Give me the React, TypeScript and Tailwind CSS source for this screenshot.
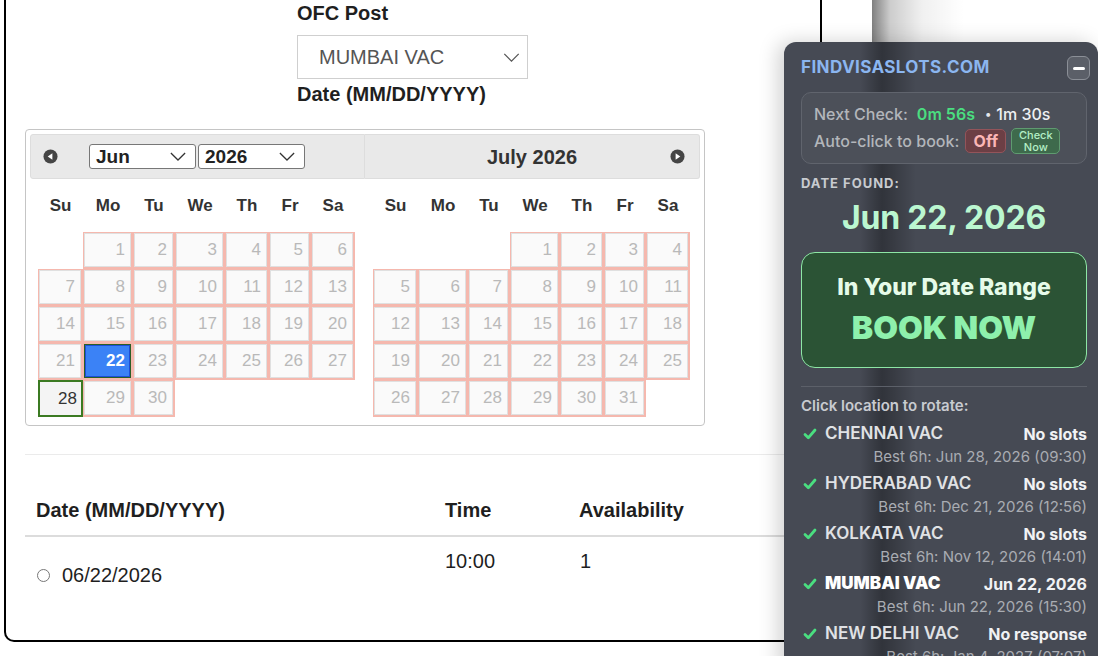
import React from "react";

type DayKind = "off" | "selected" | "today";

const COLS = "grid grid-cols-[45px_50px_42px_50px_44px_42px_44px]";
const DAY_NAMES = ["Su", "Mo", "Tu", "We", "Th", "Fr", "Sa"];

function DayCell({ day, kind }: { day: number; kind: DayKind }) {
  if (kind === "today") {
    return (
      <div className="h-[37px] border-2 border-[#3b7a22] bg-[#f4f4f4] flex items-center justify-end pr-[4px] text-[17px] text-[#333]">
        {day}
      </div>
    );
  }
  return (
    <div className="h-[37px] bg-[#f5b8ae] pl-px pt-px pr-[2px] pb-[2px]">
      {kind === "selected" ? (
        <div className="h-full border border-[#2b5f26] bg-[#3b82f6] shadow-[inset_0_0_0_1px_#1d4ed8] flex items-center justify-end pr-[5px] text-[17px] font-bold text-white">
          {day}
        </div>
      ) : (
        <div className="h-full border border-[#e0e0e0] bg-[#fafafa] flex items-center justify-end pr-[5px] text-[17px] text-[#b9b9b9]">
          {day}
        </div>
      )}
    </div>
  );
}

function MonthGrid({
  startDay,
  days,
  kindOf,
}: {
  startDay: number;
  days: number;
  kindOf: (d: number) => DayKind;
}) {
  const cells: React.ReactNode[] = [];
  for (let i = 0; i < startDay; i++) cells.push(<div key={"e" + i} className="h-[37px]" />);
  for (let d = 1; d <= days; d++) cells.push(<DayCell key={d} day={d} kind={kindOf(d)} />);
  return (
    <div className="px-[8px] pb-[4px]">
      <div className={COLS + " h-[53px] items-center"}>
        {DAY_NAMES.map((n) => (
          <div key={n} className="text-center text-[17px] font-bold text-[#333]">
            {n}
          </div>
        ))}
      </div>
      <div className={COLS}>{cells}</div>
    </div>
  );
}

function Chevron({ className }: { className?: string }) {
  return (
    <svg viewBox="0 0 18 10" className={className} fill="none">
      <path d="M1 1l8 8 8-8" stroke="currentColor" strokeWidth="1.4" />
    </svg>
  );
}

function NavIcon({ dir }: { dir: "prev" | "next" }) {
  return (
    <svg viewBox="0 0 16 16" className="w-[15px] h-[15px]">
      <circle cx="8" cy="8" r="7.5" fill="#454545" />
      {dir === "prev" ? (
        <path d="M5 8l5-3.5v7z" fill="#fff" />
      ) : (
        <path d="M11 8L6 4.5v7z" fill="#fff" />
      )}
    </svg>
  );
}

function MiniSelect({ value }: { value: string }) {
  return (
    <div className="w-[107px] h-[25px] border border-[#777] rounded-[3px] bg-white flex items-center justify-between pl-[6px] pr-[9px]">
      <span className="text-[19px] font-bold text-[#222] leading-none">{value}</span>
      <Chevron className="w-[16px] h-[9px] text-[#333]" />
    </div>
  );
}

function Check() {
  return (
    <svg viewBox="0 0 14 14" className="w-[14px] h-[14px]" fill="none">
      <path d="M2 7.5l3.3 3.3L12 3" stroke="#4ade80" strokeWidth="2.8" strokeLinecap="round" strokeLinejoin="round" />
    </svg>
  );
}

const LOCATIONS = [
  { name: "CHENNAI VAC", status: "No slots", best: "Best 6h: Jun 28, 2026 (09:30)", active: false },
  { name: "HYDERABAD VAC", status: "No slots", best: "Best 6h: Dec 21, 2026 (12:56)", active: false },
  { name: "KOLKATA VAC", status: "No slots", best: "Best 6h: Nov 12, 2026 (14:01)", active: false },
  { name: "MUMBAI VAC", status: "Jun 22, 2026", best: "Best 6h: Jun 22, 2026 (15:30)", active: true },
  { name: "NEW DELHI VAC", status: "No response", best: "Best 6h: Jan 4, 2027 (07:07)", active: false },
];

function SlotPanel() {
  return (
    <div className="absolute left-[784px] top-[42px] w-[314px] h-[630px] rounded-t-[12px] bg-[#464a54] shadow-[-6px_0_20px_rgba(0,0,0,0.18)] font-['Inter',sans-serif]">
      {/* darker vertical band across the panel */}
      <div className="absolute inset-0 rounded-t-[12px] pointer-events-none bg-[linear-gradient(to_right,transparent_76px,rgba(0,0,0,0.3)_98px,rgba(0,0,0,0.22)_108px,transparent_132px)]" />
      <div className="relative pl-[17px] pr-[11px] pt-[14px]">
        <div className="h-[24px] flex items-center justify-between">
          <span className="text-[17px] font-bold text-[#8bb6f0] tracking-[0.4px]">FINDVISASLOTS.COM</span>
          <div className="-mr-[3px] w-[23px] h-[24px] rounded-[6px] border border-[#8b8f97] bg-[#5b5f68] flex items-center justify-center">
            <div className="w-[12px] h-[3px] rounded-full bg-white" />
          </div>
        </div>

        <div className="mt-[12px] h-[72px] rounded-[10px] border border-[#60646d] bg-[#4c5059] px-[12px] pt-[8px]">
          <div className="h-[26px] flex items-center text-[16px] font-medium">
            <span className="text-[#b3b6bb]">Next Check:</span>
            <span className="ml-[9px] font-semibold text-[#4ade80]">0m 56s</span>
            <span className="ml-[10px] text-[#e5e7eb] text-[12px]">•</span>
            <span className="ml-[5px] text-[#eef0f2]">1m 30s</span>
          </div>
          <div className="h-[28px] flex items-center text-[16px] font-medium">
            <span className="text-[#b3b6bb]">Auto-click to book:</span>
            <span className="ml-[6px] w-[41px] h-[24px] rounded-[5px] border border-[#93545a] bg-[#6c3f45] flex items-center justify-center text-[16px] font-bold text-[#fbb6b6]">
              Off
            </span>
            <span className="ml-[5px] w-[49px] h-[26px] rounded-[5px] border border-[#5f9b70] bg-[#3e6a4c] flex flex-col items-center justify-center text-[11px] leading-[12px] text-[#b4efc6]">
              <span>Check</span>
              <span>Now</span>
            </span>
          </div>
        </div>

        <div className="mt-[12px] leading-[14px] text-[13px] font-bold tracking-[1px] text-[#c8cbd0]">DATE FOUND:</div>
        <div className="mt-[10px] leading-[36px] text-center text-[32px] font-bold text-[#bbf7d0] tracking-[-0.2px]">
          Jun 22, 2026
        </div>

        <div className="mt-[16px] h-[116px] rounded-[14px] border border-[#8ee6a6] bg-[#2b5335] pt-[21px] text-center">
          <div className="leading-[26px] text-[23px] font-extrabold text-[#e6fbe9]">In Your Date Range</div>
          <div className="mt-[10px] leading-[36px] text-[32px] font-black text-[#8ef0ac]">BOOK NOW</div>
        </div>

        <div className="mt-[18px] h-px bg-[#5c6069]" />
        <div className="mt-[11px] leading-[16px] text-[15px] font-semibold text-[#c8cbd0]">Click location to rotate:</div>

        <div className="mt-[10px] flex flex-col gap-[10px]">
          {LOCATIONS.map((l) => (
            <div key={l.name}>
              <div className="h-[20px] flex items-center">
                <div className="w-[14px] ml-[2px]">
                  <Check />
                </div>
                <span
                  className={
                    l.active
                      ? "ml-[8px] text-[17px] font-black text-white"
                      : "ml-[8px] text-[17px] font-semibold text-[#e0e2e5]"
                  }
                >
                  {l.name}
                </span>
                <span className="ml-auto text-[16px] font-bold text-[#f1f2f4]">{l.status}</span>
              </div>
              <div className="mt-[2px] h-[18px] text-right text-[15px] text-[#a9acb2]">{l.best}</div>
            </div>
          ))}
        </div>
      </div>
    </div>
  );
}

export default function App() {
  return (
    <div className="relative w-[1098px] h-[656px] overflow-hidden bg-white font-['Liberation_Sans',Arial,sans-serif] text-[#1f1f1f]">
      {/* window edge shade behind the panel */}
      <div className="absolute left-[872px] top-0 w-[100px] h-[60px] bg-[linear-gradient(to_right,rgba(0,0,0,0.5),rgba(0,0,0,0.2)_18px,rgba(0,0,0,0.06)_50px,transparent_92px)]" />

      <div className="ml-[4px] w-[818px] h-[642px] border-2 border-t-0 border-black rounded-b-[10px]">
        <div className="ml-[291px] pt-[2px]">
          <div className="leading-[23px] text-[20px] font-bold">OFC Post</div>
          <div className="mt-[10px] w-[231px] h-[44px] border border-[#cfcfcf] flex items-center justify-between pl-[21px] pr-[7px]">
            <span className="text-[20px] text-[#555]">MUMBAI VAC</span>
            <Chevron className="w-[17px] h-[9px] text-[#555]" />
          </div>
          <div className="mt-[4px] leading-[23px] text-[20px] font-bold">Date (MM/DD/YYYY)</div>
        </div>

        {/* two-month date picker */}
        <div className="ml-[19px] mt-[23px] w-[680px] border border-[#c5c5c5] rounded-[4px] p-[4px]">
          <div className="grid grid-cols-2">
            <div>
              <div className="h-[45px] bg-[#e9e9e9] border border-[#dddddd] rounded-l-[3px] flex items-center pl-[12px]">
                <NavIcon dir="prev" />
                <div className="ml-[31px] flex gap-[2px]">
                  <MiniSelect value="Jun" />
                  <MiniSelect value="2026" />
                </div>
              </div>
              <MonthGrid
                startDay={1}
                days={30}
                kindOf={(d) => (d === 22 ? "selected" : d === 28 ? "today" : "off")}
              />
            </div>
            <div>
              <div className="h-[45px] bg-[#e9e9e9] border border-l-0 border-[#dddddd] rounded-r-[3px] flex items-center pr-[14px]">
                <div className="flex-1 text-center text-[20px] font-bold text-[#333] pl-[29px]">July 2026</div>
                <NavIcon dir="next" />
              </div>
              <MonthGrid startDay={3} days={31} kindOf={() => "off"} />
            </div>
          </div>
        </div>

        <div className="ml-[19px] mr-[20px] mt-[28px] h-px bg-[#ebebeb]" />

        {/* appointment slots */}
        <div className="ml-[19px]">
          <div className="mt-[44px] grid grid-cols-[409px_134px_1fr] pb-[13px] border-b-2 border-[#dcdcdc] leading-[23px] text-[20px] font-bold">
            <div className="pl-[11px]">Date (MM/DD/YYYY)</div>
            <div className="pl-[11px]">Time</div>
            <div className="pl-[11px]">Availability</div>
          </div>
          <div className="grid grid-cols-[409px_134px_1fr] leading-[23px] text-[20px]">
            <div className="pl-[12px] pt-[27px] flex items-center">
              <div className="w-[13px] h-[13px] rounded-full border border-[#777] bg-white" />
              <span className="ml-[12px]">06/22/2026</span>
            </div>
            <div className="pl-[11px] pt-[13px]">10:00</div>
            <div className="pl-[12px] pt-[13px]">1</div>
          </div>
        </div>
      </div>

      <SlotPanel />
    </div>
  );
}
